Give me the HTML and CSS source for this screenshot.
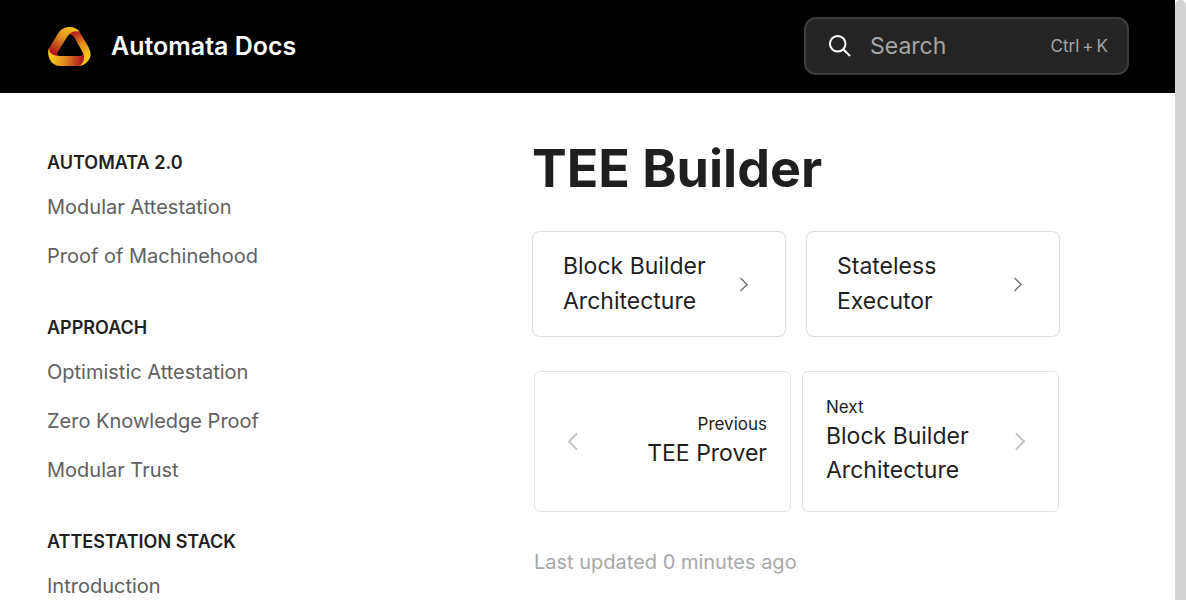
FILE: index.html
```html
<!DOCTYPE html>
<html lang="en">
<head>
<meta charset="utf-8">
<meta name="viewport" content="width=device-width, initial-scale=1">
<title>TEE Builder - Automata Docs</title>
<link rel="stylesheet" href="styles.css">
</head>
<body>
<div class="page">
  <header class="header">
    <a class="brand" href="#">
      <svg class="logo" viewBox="0 0 44 44" aria-hidden="true">
        <defs>
          <linearGradient id="band-left" gradientUnits="userSpaceOnUse" x1="24" y1="4" x2="7" y2="29">
            <stop offset="0" stop-color="#f6bd20"/>
            <stop offset="0.4" stop-color="#e29522"/>
            <stop offset="1" stop-color="#b0161c"/>
          </linearGradient>
          <linearGradient id="band-right" gradientUnits="userSpaceOnUse" x1="40" y1="31" x2="28" y2="7">
            <stop offset="0" stop-color="#f8c41a"/>
            <stop offset="0.45" stop-color="#e08c20"/>
            <stop offset="1" stop-color="#b0161c"/>
          </linearGradient>
          <linearGradient id="band-bottom" gradientUnits="userSpaceOnUse" x1="5" y1="34" x2="35" y2="38">
            <stop offset="0" stop-color="#f8c41a"/>
            <stop offset="0.45" stop-color="#dc8420"/>
            <stop offset="1" stop-color="#b0161c"/>
          </linearGradient>
        </defs>
        <path fill="url(#band-right)" d="M20 12 Q25 4 32 7 L41.500 23 Q46 32 41 37 Q37 42 31 42 Q38 38 36 29 L27.500 13.500 Q24 8.500 20 12Z"/>
        <path fill="url(#band-left)" d="M1.500 25 L12 8 Q16 3 23 3 Q29 3 32.500 7.500 Q24 6 20 13 L10.500 28.500 Q9 32 13 32 Q4 34 1.500 25Z"/>
        <path fill="url(#band-bottom)" d="M2 24 Q2 32 13 32 L33 32 Q36.500 32 36 28 Q39 38 32 42 L13 42 Q5.500 41.500 2.500 35 Q0 29 2 24Z"/>
      </svg>
      <span class="brand-name">Automata Docs</span>
    </a>
    <label class="search">
      <svg class="search-icon" viewBox="0 0 24 24" aria-hidden="true"><circle cx="9.700" cy="9.700" r="7.800"/><path d="M15.500 15.500l6.500 6.500"/></svg>
      <input class="search-input" type="search" placeholder="Search" aria-label="Search">
      <span class="shortcut"><span>Ctrl</span><span>+</span><span>K</span></span>
    </label>
  </header>
  <div class="body">
    <nav class="sidebar" aria-label="Table of contents">
      <section class="group">
        <h2 class="group-title">AUTOMATA 2.0</h2>
        <a class="nav-link" href="#">Modular Attestation</a>
        <a class="nav-link" href="#">Proof of Machinehood</a>
      </section>
      <section class="group">
        <h2 class="group-title">APPROACH</h2>
        <a class="nav-link" href="#">Optimistic Attestation</a>
        <a class="nav-link" href="#">Zero Knowledge Proof</a>
        <a class="nav-link" href="#">Modular Trust</a>
      </section>
      <section class="group">
        <h2 class="group-title">ATTESTATION STACK</h2>
        <a class="nav-link" href="#">Introduction</a>
      </section>
    </nav>
    <main class="content">
      <h1 class="title">TEE Builder</h1>
      <div class="cards">
        <a class="card" href="#">
          <span class="card-text">Block Builder Architecture</span>
          <svg class="chevron" viewBox="0 0 20 20" aria-hidden="true"><path d="M6.500 4l6.500 6.500-6.500 6.500"/></svg>
        </a>
        <a class="card" href="#">
          <span class="card-text">Stateless Executor</span>
          <svg class="chevron" viewBox="0 0 20 20" aria-hidden="true"><path d="M6.500 4l6.500 6.500-6.500 6.500"/></svg>
        </a>
      </div>
      <div class="pager">
        <a class="step" href="#">
          <svg class="arrow" viewBox="0 0 24 24" aria-hidden="true"><path d="M16 4.500l-8 8 8 8"/></svg>
          <span class="step-text step-previous"><small class="step-label">Previous</small>TEE Prover</span>
        </a>
        <a class="step" href="#">
          <span class="step-text"><small class="step-label">Next</small>Block Builder Architecture</span>
          <svg class="arrow" viewBox="0 0 24 24" aria-hidden="true"><path d="M8 4.500l8 8-8 8"/></svg>
        </a>
      </div>
      <p class="updated">Last updated 0 minutes ago</p>
    </main>
  </div>
</div>
<div class="scrollbar"></div>
</body>
</html>
```
FILE: styles.css
```css
* {
  box-sizing: border-box;
}

body {
  margin: 0;
  height: 100vh;
  overflow: hidden;
  display: flex;
  background: #fff;
  color: #1f1f1f;
  font-family: Inter, "Liberation Sans", sans-serif;
}

a {
  color: inherit;
  text-decoration: none;
}

.page {
  flex: 1;
  min-width: 0;
  display: flex;
  flex-direction: column;
}

.scrollbar {
  width: 11px;
  background: #d3d3d3;
  border-radius: 5px 5px 0 0;
}

.header {
  display: flex;
  align-items: center;
  justify-content: space-between;
  padding: 17px 46px 18px 47px;
  background: #000;
}

.brand {
  display: flex;
  align-items: center;
  gap: 20px;
  color: #fff;
}

.logo {
  width: 44px;
  height: 44px;
}

.brand-name {
  font-size: 25px;
  line-height: 30px;
  font-weight: 600;
}

.search {
  display: flex;
  align-items: center;
  width: 325px;
  height: 58px;
  padding: 0 19px 0 22px;
  border: 2px solid #3c3c3c;
  border-radius: 12px;
  background: #242424;
  color: #a6a6a6;
}

.search-icon {
  flex: none;
  width: 24px;
  height: 24px;
  fill: none;
  stroke: #fff;
  stroke-width: 2;
}

.search-input {
  flex: 1;
  min-width: 0;
  margin-left: 18px;
  padding: 0;
  border: 0;
  outline: 0;
  background: none;
  color: inherit;
  font: inherit;
  font-size: 23px;
}

.search-input::placeholder {
  color: #a6a6a6;
}

.shortcut {
  display: flex;
  gap: 3px;
  font-size: 17px;
  line-height: 22px;
}

.body {
  flex: 1;
  min-height: 0;
  display: flex;
  justify-content: space-between;
}

.sidebar {
  padding: 57px 0 0 47px;
  overflow: hidden;
}

.group {
  margin-bottom: 34px;
}

.group-title {
  margin: 0 0 7px;
  font-size: 18px;
  line-height: 26px;
  font-weight: 600;
}

.nav-link {
  display: block;
  padding: 10px 0;
  color: #606060;
  font-size: 20px;
  line-height: 29px;
}

.content {
  width: 528px;
  margin-right: 115px;
  padding-top: 43px;
}

.title {
  margin: 0 0 30px;
  font-size: 52px;
  line-height: 65px;
  font-weight: 700;
}

.cards {
  display: grid;
  grid-template-columns: 1fr 1fr;
  gap: 20px;
}

.card {
  display: flex;
  align-items: center;
  justify-content: space-between;
  padding: 17px 31px 17px 30px;
  border: 1px solid #dedede;
  border-radius: 8px;
  box-shadow: 0 0 1px #d0d0d0;
  font-size: 23px;
  line-height: 35px;
}

.card-text {
  width: 160px;
}

.chevron {
  flex: none;
  width: 20px;
  height: 20px;
  fill: none;
  stroke: #777;
  stroke-width: 1.5;
}

.pager {
  display: grid;
  grid-template-columns: 1fr 1fr;
  gap: 11px;
  margin: 34px 1px 0 2px;
}

.step {
  display: flex;
  align-items: center;
  justify-content: space-between;
  padding: 23px 23px 24px;
  border: 1px solid #e3e3e3;
  border-radius: 6px;
  font-size: 23px;
  line-height: 34px;
}

.step-text {
  width: 160px;
}

.step-previous {
  text-align: right;
}

.step-label {
  display: block;
  font-size: 17px;
  line-height: 24px;
}

.arrow {
  flex: none;
  width: 24px;
  height: 24px;
  margin: 0 3px;
  fill: none;
  stroke: #c4c4c4;
  stroke-width: 2;
}

.updated {
  margin: 35px 2px 0;
  color: #a8a8a8;
  font-size: 20px;
  line-height: 30px;
}
```
